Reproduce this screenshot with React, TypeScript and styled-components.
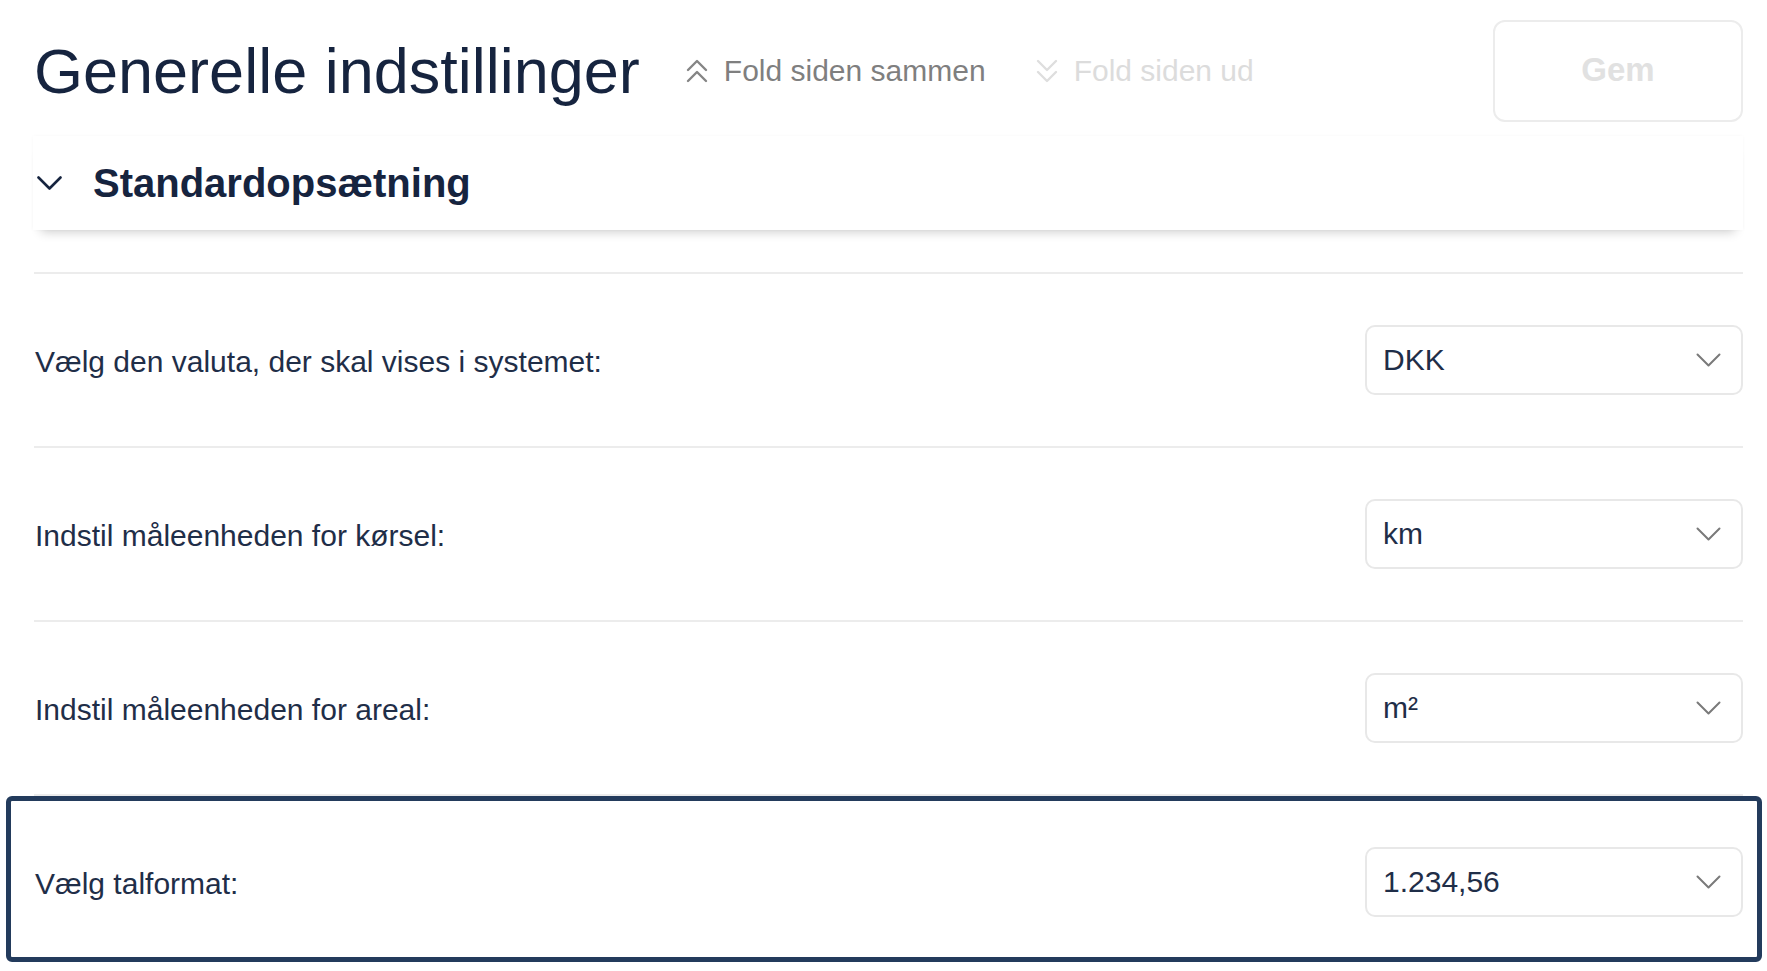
import React from "react"
import styled, { createGlobalStyle } from "styled-components"

const NAVY = "#16243f"
const TEXT = "#1f2e48"

const GlobalStyle = createGlobalStyle`
  html, body {
    margin: 0;
    padding: 0;
    background: #ffffff;
  }
  body {
    font-family: "Liberation Sans", Arial, Helvetica, sans-serif;
    color: ${TEXT};
  }
`

type Option = { label: string; value: string }

const rows: Option[] = [
	{ label: "Vælg den valuta, der skal vises i systemet:", value: "DKK" },
	{ label: "Indstil måleenheden for kørsel:", value: "km" },
	{ label: "Indstil måleenheden for areal:", value: "m²" },
	{ label: "Vælg talformat:", value: "1.234,56" },
]

const ChevronDown = ({ color, width = 25, height = 14, stroke = 2 }: { color: string; width?: number; height?: number; stroke?: number }) => (
	<svg width={width} height={height} viewBox="0 0 25 14" fill="none">
		<path d="M1.5 1.5 L12.5 12.5 L23.5 1.5" stroke={color} strokeWidth={stroke} strokeLinecap="round" strokeLinejoin="round" />
	</svg>
)

const DoubleChevron = ({ up, color }: { up?: boolean; color: string }) => (
	<svg width="22" height="24" viewBox="0 0 22 24" fill="none" style={{ transform: up ? "none" : "rotate(180deg)" }}>
		<path d="M2 11 L11 2 L20 11" stroke={color} strokeWidth={2.4} strokeLinecap="round" strokeLinejoin="round" />
		<path d="M2 22 L11 13 L20 22" stroke={color} strokeWidth={2.4} strokeLinecap="round" strokeLinejoin="round" />
	</svg>
)

const App = () => {
	return (
		<>
			<GlobalStyle />
			<Page>
				<Header>
					<Title>Generelle indstillinger</Title>
					<FoldLink $muted={false}>
						<DoubleChevron up color="#858585" />
						Fold siden sammen
					</FoldLink>
					<FoldLink $muted>
						<DoubleChevron color="#dedede" />
						Fold siden ud
					</FoldLink>
					<SaveButton disabled>Gem</SaveButton>
				</Header>

				<SectionCard>
					<ChevronDown color={NAVY} stroke={2.6} />
					<SectionTitle>Standardopsætning</SectionTitle>
				</SectionCard>

				<Rows>
					{rows.map((row, i) => (
						<Row key={row.label} $highlighted={i === rows.length - 1}>
							<Label>{row.label}</Label>
							<Select>
								<SelectValue>{row.value}</SelectValue>
								<ChevronDown color="#7a7a7a" stroke={2} />
							</Select>
						</Row>
					))}
				</Rows>
			</Page>
		</>
	)
}
export default App

const Page = styled.div`
  padding: 20px 24px 0 34px;
  height: 971px;
  box-sizing: border-box;
  overflow: hidden;
`
const Header = styled.div`
  display: flex;
  align-items: center;
  height: 102px;
`
const Title = styled.h1`
  margin: 0 46px 0 0;
  font-size: 63px;
  line-height: 1;
  font-weight: 400;
  color: ${NAVY};
`
const FoldLink = styled.div<{ $muted: boolean }>`
  display: flex;
  align-items: center;
  gap: 16px;
  margin-right: 50px;
  font-size: 30px;
  line-height: 1;
  color: ${(p) => (p.$muted ? "#dcdcdc" : "#7f7f7f")};
  cursor: pointer;
`
const SaveButton = styled.button`
  margin-left: auto;
  width: 250px;
  height: 102px;
  border: 2px solid #ececec;
  border-radius: 12px;
  background: #ffffff;
  font-family: inherit;
  font-size: 33px;
  font-weight: 700;
  color: #e1e1e1;
  padding: 0 0 2px;
`
const SectionCard = styled.div`
  display: flex;
  align-items: center;
  gap: 31px;
  height: 94px;
  margin-top: 14px;
  margin-left: -1px;
  padding-left: 4px;
  background: #ffffff;
  box-shadow: 0 10px 10px -8px rgba(0, 0, 0, 0.2), 0 0 3px rgba(0, 0, 0, 0.03);
`
const SectionTitle = styled.h2`
  margin: 0;
  font-size: 40px;
  line-height: 1;
  font-weight: 700;
  color: ${NAVY};
`
const Rows = styled.div`
  margin-top: 42px;
`
const Row = styled.div<{ $highlighted: boolean }>`
  position: relative;
  display: flex;
  align-items: center;
  justify-content: space-between;
  height: 172px;
  border-top: 2px solid #ececec;

  ${(p) =>
		p.$highlighted &&
		`
    &::after {
      content: "";
      position: absolute;
      top: 0;
      bottom: 6px;
      left: -28px;
      right: -19px;
      border: 5px solid #233b5c;
      border-radius: 6px;
      pointer-events: none;
    }
  `}
`
const Label = styled.span`
  font-size: 30px;
  line-height: 1;
  color: ${TEXT};
  padding: 3px 0 0 1px;
`
const Select = styled.div`
  display: flex;
  align-items: center;
  justify-content: space-between;
  width: 378px;
  height: 70px;
  box-sizing: border-box;
  padding: 0 20px 0 16px;
  border: 2px solid #e8e8e8;
  border-radius: 10px;
  background: #ffffff;
  cursor: pointer;
`
const SelectValue = styled.span`
  font-size: 30px;
  line-height: 1;
  color: ${TEXT};
`
